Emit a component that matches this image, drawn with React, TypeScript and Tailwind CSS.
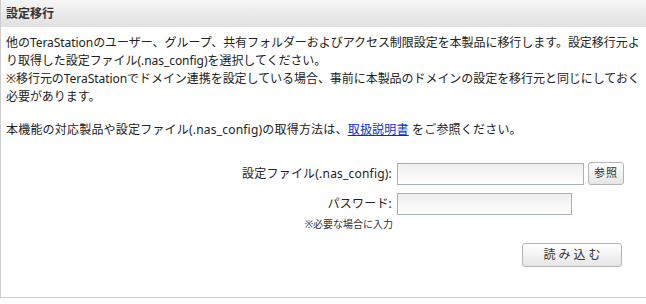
import React from "react";

export default function App() {
  const font = { fontFamily: '"Noto Sans", "Noto Sans CJK JP", sans-serif' };
  return (
    <div className="w-[646px] h-[304px] bg-white overflow-hidden" style={font}>
      <div className="w-[646px] h-[298px] border-l border-b border-[#cccccc] flex flex-col">
        <div className="h-[27px] bg-gradient-to-b from-[#f6f6f6] to-[#e0e0e0] flex items-center px-[5px] text-[12px] font-bold text-[#333333]">
          設定移行
        </div>
        <div className="pl-[5px] pt-[7px] text-[12px] leading-[18px] text-[#222222] whitespace-nowrap tracking-[-0.05px]">
          <p>他のTeraStationのユーザー、グループ、共有フォルダーおよびアクセス制限設定を本製品に移行します。設定移行元よ</p>
          <p>り取得した設定ファイル(.nas_config)を選択してください。</p>
          <p>※移行元のTeraStationでドメイン連携を設定している場合、事前に本製品のドメインの設定を移行元と同じにしておく</p>
          <p>必要があります。</p>
          <p className="mt-[15px] tracking-[0.2px]">
            本機能の対応製品や設定ファイル(.nas_config)の取得方法は、
            <a className="text-[#0033cc] underline">取扱説明書</a> をご参照ください。
          </p>
        </div>
        <div className="mt-[23px] flex flex-col text-[12px] text-[#222222]">
          <div className="flex items-center">
            <div className="w-[392px] text-right pr-[1px] tracking-[0.2px]">設定ファイル(.nas_config):</div>
            <div className="ml-[4px] w-[187px] h-[22px] border border-[#aab0c4] bg-gradient-to-b from-[#eeeeee] to-white" />
            <button className="ml-[4px] w-[36px] h-[23px] border border-[#b4b4b4] rounded-[3px] bg-gradient-to-b from-white to-[#e6e6e6] text-[11px] text-[#333333] tracking-[1px]">
              参照
            </button>
          </div>
          <div className="flex items-center mt-[8px]">
            <div className="w-[392px] text-right pr-[1px] tracking-[0.2px]">パスワード:</div>
            <div className="ml-[4px] w-[175px] h-[22px] border border-[#aab0c4] bg-gradient-to-b from-[#eeeeee] to-white" />
          </div>
          <div className="w-[392px] text-right text-[10px] leading-[12px] mt-[3px] text-[#333333]">※必要な場合に入力</div>
          <div className="flex mt-[13px]">
            <button className="ml-[521px] w-[100px] h-[24px] border border-[#b4b4b4] rounded-[3px] bg-gradient-to-b from-white to-[#e6e6e6] text-[12px] text-[#333333] tracking-[3px] pl-[3px]">
              読み込む
            </button>
          </div>
        </div>
      </div>
    </div>
  );
}
